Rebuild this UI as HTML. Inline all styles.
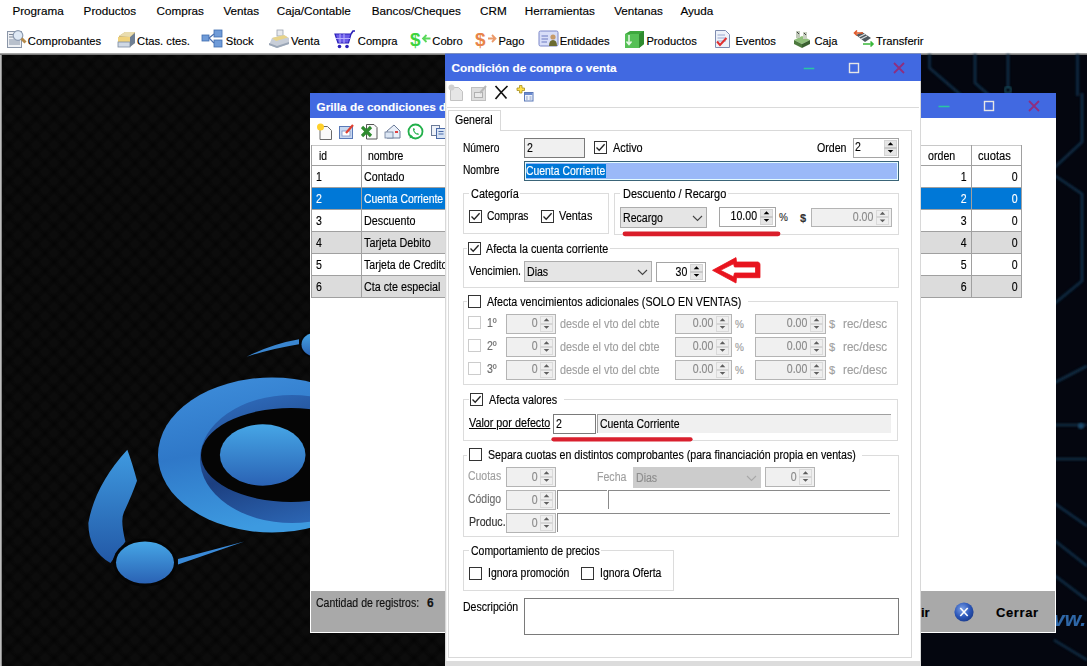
<!DOCTYPE html>
<html><head><meta charset="utf-8"><style>
html,body{margin:0;padding:0;}
body{width:1087px;height:666px;overflow:hidden;position:relative;background:#fff;font-family:"Liberation Sans", sans-serif;}
.a{position:absolute;}
.t{position:absolute;white-space:nowrap;line-height:1;-webkit-text-stroke:0.15px currentColor;}
</style></head><body>
<div class="a" style="left:0;top:0;width:1087px;height:52px;background:#fff"></div>
<div class="t" style="top:5.10px;font-size:11.7px;color:#000;left:12.399999999999999px;">Programa</div>
<div class="t" style="top:5.10px;font-size:11.7px;color:#000;left:83.60000000000001px;">Productos</div>
<div class="t" style="top:5.10px;font-size:11.7px;color:#000;left:156.5px;">Compras</div>
<div class="t" style="top:5.10px;font-size:11.7px;color:#000;left:223.39999999999998px;">Ventas</div>
<div class="t" style="top:5.10px;font-size:11.7px;color:#000;left:276.7px;">Caja/Contable</div>
<div class="t" style="top:5.10px;font-size:11.7px;color:#000;left:371.8px;">Bancos/Cheques</div>
<div class="t" style="top:5.10px;font-size:11.7px;color:#000;left:480.09999999999997px;">CRM</div>
<div class="t" style="top:5.10px;font-size:11.7px;color:#000;left:524.8000000000001px;">Herramientas</div>
<div class="t" style="top:5.10px;font-size:11.7px;color:#000;left:614.2px;">Ventanas</div>
<div class="t" style="top:5.10px;font-size:11.7px;color:#000;left:680.4000000000001px;">Ayuda</div>
<div class="t" style="top:35.92px;font-size:11.2px;color:#000;left:27.8px;">Comprobantes</div>
<div class="t" style="top:35.92px;font-size:11.2px;color:#000;left:137.1px;">Ctas. ctes.</div>
<div class="t" style="top:35.92px;font-size:11.2px;color:#000;left:225.7px;">Stock</div>
<div class="t" style="top:35.92px;font-size:11.2px;color:#000;left:291.0px;">Venta</div>
<div class="t" style="top:35.92px;font-size:11.2px;color:#000;left:357.8px;">Compra</div>
<div class="t" style="top:35.92px;font-size:11.2px;color:#000;left:432.3px;">Cobro</div>
<div class="t" style="top:35.92px;font-size:11.2px;color:#000;left:498.4px;">Pago</div>
<div class="t" style="top:35.92px;font-size:11.2px;color:#000;left:559.8000000000001px;">Entidades</div>
<div class="t" style="top:35.92px;font-size:11.2px;color:#000;left:646.4000000000001px;">Productos</div>
<div class="t" style="top:35.92px;font-size:11.2px;color:#000;left:735.4000000000001px;">Eventos</div>
<div class="t" style="top:35.92px;font-size:11.2px;color:#000;left:814.5px;">Caja</div>
<div class="t" style="top:35.92px;font-size:11.2px;color:#000;left:876.1px;">Transferir</div>
<div class="a" style="left:0px;top:53px;width:1087px;height:1px;background:#a4a4a4;"></div>
<div class="a" style="left:0px;top:54px;width:1087px;height:1px;background:#7c7c7c;"></div>
<svg class="a" style="left:6px;top:29px" width="22" height="20" viewBox="0 0 22 20">
<rect x="1.5" y="2.5" width="14" height="16" fill="#eef0f4" stroke="#8a96a8"/>
<rect x="3" y="10" width="11" height="6" fill="#b8c0cc"/>
<path d="M3 5.5 H8 M3 8 H7" stroke="#7d8796"/>
<circle cx="12" cy="6.5" r="4.8" fill="#dfe9f5" stroke="#8d9bb0" stroke-width="1.2"/>
<path d="M15.5 9.5 L19.5 13.5" stroke="#b58a4a" stroke-width="3"/></svg>
<svg class="a" style="left:116px;top:29px" width="22" height="20" viewBox="0 0 22 20">
<path d="M3 7 L9 3 L19 3 L19 14 L13 18 L2 18 Z" fill="#c9b57a"/>
<rect x="2" y="8" width="12" height="5" fill="#f0d27c"/>
<rect x="2" y="13" width="12" height="5" fill="#cfd8e4" stroke="#7a8ba0" stroke-width="0.8"/>
<path d="M14 8 L19 4 L19 14 L14 18 Z" fill="#6f7f94"/>
<path d="M3 7 L9 3 L19 3 L14 8 Z" fill="#e9dcae"/></svg>
<svg class="a" style="left:201px;top:29px" width="22" height="20" viewBox="0 0 22 20">
<rect x="1" y="6" width="7" height="6" fill="#6f9bd8" stroke="#3f6db0" stroke-width="0.8"/>
<rect x="13" y="1" width="8" height="7" fill="#6f9bd8" stroke="#3f6db0" stroke-width="0.8"/>
<rect x="13" y="11" width="8" height="7" fill="#6f9bd8" stroke="#3f6db0" stroke-width="0.8"/>
<path d="M8 9 L13 5 M8 9 L13 14" stroke="#4a6fae" stroke-width="1.2"/></svg>
<svg class="a" style="left:268px;top:29px" width="22" height="20" viewBox="0 0 22 20">
<rect x="9" y="1" width="6" height="6" fill="#e8eaee" stroke="#9aa2ae" stroke-width="0.8"/>
<path d="M4 9 L16 6 L21 9 L21 15 L9 19 L1 16 Z" fill="#c8ced8"/>
<path d="M4 9 L16 6 L20 8.5 L8 12 Z" fill="#e8d48a"/>
<path d="M1 16 L9 19 L21 15 L21 13 L9 17 L1 14Z" fill="#9aa6b6"/></svg>
<svg class="a" style="left:334px;top:29px" width="22" height="20" viewBox="0 0 22 20">
<path d="M1 5 H17 L14.5 14 H4 Z" fill="#6a5ae8" stroke="#2a1fb8" stroke-width="1.2"/>
<path d="M6 5 V14 M10 5 V14 M2 9.5 H16" stroke="#b8b0ff" stroke-width="1"/>
<path d="M17 5 L19 2 H21" stroke="#2a1fb8" stroke-width="1.6" fill="none"/>
<circle cx="5.5" cy="17.5" r="1.8" fill="#2a1fb8"/><circle cx="13" cy="17.5" r="1.8" fill="#2a1fb8"/></svg>
<svg class="a" style="left:410px;top:29px" width="22" height="20" viewBox="0 0 22 20">
<text x="0" y="17" font-family="Liberation Sans" font-weight="bold" font-size="19" fill="#3ed43e">$</text>
<path d="M20.5 9.5 H13 M16.5 6 L13 9.5 L16.5 13" stroke="#5ad85a" stroke-width="1.8" fill="none"/></svg>
<svg class="a" style="left:475px;top:29px" width="22" height="20" viewBox="0 0 22 20">
<text x="0" y="17" font-family="Liberation Sans" font-weight="bold" font-size="19" fill="#e8844a">$</text>
<path d="M13 9.5 H20.5 M17 6 L20.5 9.5 L17 13" stroke="#eb9a6a" stroke-width="1.8" fill="none"/></svg>
<svg class="a" style="left:538px;top:29px" width="22" height="20" viewBox="0 0 22 20">
<rect x="1" y="2" width="19" height="15" rx="1.5" fill="#d8def8" stroke="#7b86c8" stroke-width="1"/>
<path d="M3.5 7 H10 M3.5 10 H10 M3.5 13 H9" stroke="#6a78c0" stroke-width="1.2"/>
<circle cx="15" cy="8" r="2.6" fill="#c69a6a"/>
<path d="M11 17 Q11 11 15 11 Q19 11 19 17 Z" fill="#6a6a30"/></svg>
<svg class="a" style="left:624px;top:29px" width="22" height="20" viewBox="0 0 22 20">
<path d="M1 5 L6 2 L20 2 L20 15 L15 19 L1 19 Z" fill="#3da83d"/>
<path d="M1 5 L15 5 L15 19 L1 19 Z" fill="#55c055"/>
<path d="M15 5 L20 2 L20 15 L15 19 Z" fill="#2f8a2f"/>
<path d="M5 6 V15 M2.5 12.5 L5 15.5 L7.5 12.5" stroke="#e8f8e8" stroke-width="1.5" fill="none"/></svg>
<svg class="a" style="left:714px;top:29px" width="17" height="20" viewBox="0 0 17 20">
<path d="M1.5 1.5 H11.5 L15.5 5.5 V18.5 H1.5 Z" fill="#eef2fa" stroke="#7e8cb0"/>
<path d="M3.5 6 H11 M3.5 9 H12 M3.5 12 H12" stroke="#9aa8d0"/>
<path d="M3 12.5 L6 16 L12.5 9" stroke="#e03030" stroke-width="2" fill="none"/></svg>
<svg class="a" style="left:793px;top:29px" width="18" height="20" viewBox="0 0 18 20">
<path d="M1 11 L9 7 L17 11 L9 15 Z" fill="#8fbf7a"/>
<path d="M1 11 L9 15 L9 19 L1 15 Z" fill="#4d7a3e"/>
<path d="M9 15 L17 11 L17 15 L9 19 Z" fill="#3a6030"/>
<rect x="3" y="2" width="4" height="7" fill="#bfc8b8"/><rect x="10" y="3" width="4" height="7" fill="#c8d0c0"/>
<path d="M4 3 L6 5 M11 4 L13 6" stroke="#404040" stroke-width="1"/></svg>
<svg class="a" style="left:853px;top:29px" width="22" height="20" viewBox="0 0 22 20">
<path d="M3 6 L9 3 L18 9 L12 13 Z" fill="#505a60"/>
<path d="M6 8 L12 5 M8 10 L14 7" stroke="#d8dee0" stroke-width="1.2"/>
<path d="M10 4 H1.5 M4 1.5 L1.5 4 L4 6.5" stroke="#e05a2a" stroke-width="1.6" fill="none"/>
<path d="M10 15 H20 M17.5 12.5 L20 15 L17.5 17.5" stroke="#3ab83a" stroke-width="1.6" fill="none"/></svg>
<div class="a" style="left:0;top:55px;width:1087px;height:611px;background-color:#050505;background-image:radial-gradient(circle, #0c0c0c 0, #0c0c0c 3px, rgba(5,5,5,0) 8px),radial-gradient(circle, #0c0c0c 0, #0c0c0c 3px, rgba(5,5,5,0) 8px);background-size:18px 18px;background-position:0 0,9px 9px"></div>
<div class="a" style="left:700px;top:55px;width:387px;height:611px;background:#04060f"></div>
<div class="a" style="left:0;top:55px;width:1px;height:611px;background:#bdbdbd"></div>
<div class="a" style="left:1px;top:55px;width:1px;height:611px;background:#8a8a8a"></div>
<svg class="a" style="left:0;top:0" width="1087" height="666">
<defs>
<linearGradient id="ringg" x1="0" y1="0" x2="0.3" y2="1"><stop offset="0" stop-color="#3f8fdc"/><stop offset="0.5" stop-color="#2f78c8"/><stop offset="1" stop-color="#3d9ae0"/></linearGradient>
<linearGradient id="wallg" x1="0.2" y1="0" x2="0.6" y2="1"><stop offset="0" stop-color="#2f6cbc"/><stop offset="0.55" stop-color="#1c3f80"/><stop offset="1" stop-color="#2c66b4"/></linearGradient>
<linearGradient id="ballg" x1="0" y1="0" x2="0" y2="1"><stop offset="0" stop-color="#46a6e6"/><stop offset="1" stop-color="#2a62b4"/></linearGradient>
<linearGradient id="crg" x1="0" y1="0" x2="0" y2="1"><stop offset="0" stop-color="#3f9ae0"/><stop offset="1" stop-color="#2258a6"/></linearGradient>
</defs>
<ellipse cx="272" cy="455" rx="114" ry="77.5" fill="url(#ringg)"/>
<ellipse cx="292" cy="459" rx="92" ry="64" fill="url(#wallg)"/>
<ellipse cx="291" cy="455" rx="90" ry="47" fill="#050505"/>
<ellipse cx="262.7" cy="455" rx="42.8" ry="30.7" fill="url(#ballg)"/>
<path d="M127.3 449.7 Q95 485 88.4 522.7 Q88 550 110.5 563 L125.4 541.6 Q120 520 124 512 Q132 495 137 480.8 Q132 462 127.3 449.7 Z" fill="url(#crg)"/>
<ellipse cx="145" cy="562.5" rx="32" ry="24" fill="#050505"/>
<ellipse cx="145" cy="562.5" rx="29" ry="21" fill="url(#ballg)"/>
<path d="M178 559 L244.3 541.6 L178 564.6 Z" fill="#3a8ad8"/>
<path d="M246.6 356.8 Q272 344 299 339.3 L299 344.2 Q270 349 246.6 356.8 Z" fill="#3a86d0"/>
<ellipse cx="316" cy="344.4" rx="16" ry="13.5" fill="#050505"/>
<ellipse cx="316" cy="344.4" rx="14.5" ry="12" fill="url(#ballg)"/>
</svg>
<svg class="a" style="left:0;top:0" width="1087" height="666">
<defs><filter id="soft" x="-10%" y="-10%" width="120%" height="120%"><feGaussianBlur stdDeviation="0.8"/></filter></defs>
<g filter="url(#soft)" fill="none" stroke="#143550" stroke-width="2.6" opacity="0.85">
<path d="M929.5 54 V68 L962 96 M975 54 V83 L990 96 M1008 54 V88 M1077.5 54 V96"/>
<path d="M1082 93 V142 L1054 168 M1054 175 L1082 194 V281 L1054 304"/>
<path d="M1054 383 L1087 366 M1054 425 H1087 M1054 459 H1087 M1054 503 L1087 526 M1054 540 L1087 566 M1054 575 L1087 600 M1054 640 L1087 660"/>
</g>
<circle cx="1008" cy="90" r="3.2" fill="none" stroke="#1a4a58" stroke-width="2" filter="url(#soft)"/>
<circle cx="1081" cy="426" r="3" fill="#1a4a6a" filter="url(#soft)"/>
</svg>
<div class="t" style="left:1053px;top:608px;font-size:21px;font-weight:bold;font-style:italic;color:#3472b8;opacity:0.9">vw.</div>

<div class="a" style="left:0;top:0;width:1087px;height:666px;overflow:hidden">
<div class="a" style="left:310px;top:93px;width:746px;height:540px;background:#ffffff;"></div>
<div class="a" style="left:310px;top:93px;width:746px;height:25px;background:#4169e1;"></div>
<div class="t" style="top:101.81px;font-size:11.8px;color:#fff;left:316.5px;font-weight:bold;">Grilla de condiciones de compra o venta</div>
<svg class="a" style="left:0;top:0" width="1087" height="666"><path d="M938.5 106.5 H949.5" stroke="#2ac4a4" stroke-width="1.6"/><rect x="984.5" y="101.5" width="9" height="9" fill="none" stroke="#e6e6e6" stroke-width="1.4"/><path d="M1029 101 L1039 111 M1039 101 L1029 111" stroke="#8e2e80" stroke-width="1.8"/></svg>
<svg class="a" style="left:316px;top:123px" width="17" height="17" viewBox="0 0 17 17">
<path d="M4 3.5 H11.5 L15.5 7.5 V16.5 H4 Z" fill="#fafafa" stroke="#6a6a6a"/>
<circle cx="4.5" cy="4" r="3.5" fill="#ffd02a"/></svg>
<svg class="a" style="left:338px;top:123px" width="17" height="17" viewBox="0 0 17 17">
<rect x="1.5" y="3.5" width="13" height="12" fill="#c8d8f0" stroke="#5a7ab8"/>
<rect x="4" y="8" width="8" height="5" fill="#fff" stroke="#7a90c0" stroke-width="0.8"/>
<path d="M8 10 L15 2" stroke="#e04030" stroke-width="2.2"/></svg>
<svg class="a" style="left:361px;top:123px" width="17" height="17" viewBox="0 0 17 17">
<path d="M5.5 1.5 H13 L16 4.5 V16 H5.5 Z" fill="#fafafa" stroke="#555"/>
<path d="M1 4 L10 13 M10 4 L1 13" stroke="#2f8a2f" stroke-width="3.2"/></svg>
<svg class="a" style="left:384px;top:123px" width="17" height="17" viewBox="0 0 17 17">
<path d="M3 8 L10 2 L16 8 V15 H3 Z" fill="#e8eef8" stroke="#6a7a98"/>
<rect x="1" y="9" width="8" height="6" fill="#dce6f4" stroke="#6a7a98" stroke-width="0.8"/>
<rect x="11" y="8" width="3" height="2" fill="#e04040"/></svg>
<svg class="a" style="left:407px;top:123px" width="17" height="17" viewBox="0 0 17 17">
<circle cx="8.5" cy="8.5" r="7" fill="#fff" stroke="#22b04a" stroke-width="1.8"/>
<path d="M2.5 15.5 L3.5 11.5 L6 13.5 Z" fill="#22b04a"/>
<path d="M6 5.5 Q5.5 8 8 10.5 Q10.5 12.5 12 11.5 L11 10 L9.8 10.6 Q8 9.5 7.2 7.4 L8 6.6 L7 5 Z" fill="#22b04a"/></svg>
<svg class="a" style="left:430px;top:123px" width="17" height="17" viewBox="0 0 17 17">
<rect x="1.5" y="2.5" width="8" height="10" fill="#eef2f8" stroke="#6a7a98"/>
<rect x="6.5" y="5.5" width="9" height="10" fill="#d8e4f4" stroke="#4a6aa8"/>
<path d="M8.5 8.5 H13.5 M8.5 11 H13.5" stroke="#4a6aa8"/></svg>
<div class="a" style="left:311px;top:145px;width:135px;height:152px;background:#fff;"></div>
<div class="a" style="left:921px;top:145px;width:101px;height:152px;background:#fff;"></div>
<div class="a" style="left:311px;top:165px;width:135px;height:22px;background:#ffffff;"></div>
<div class="a" style="left:921px;top:165px;width:101px;height:22px;background:#ffffff;"></div>
<div class="a" style="left:311px;top:187px;width:135px;height:22px;background:#0078d7;"></div>
<div class="a" style="left:921px;top:187px;width:101px;height:22px;background:#0078d7;"></div>
<div class="a" style="left:311px;top:209px;width:135px;height:22px;background:#ffffff;"></div>
<div class="a" style="left:921px;top:209px;width:101px;height:22px;background:#ffffff;"></div>
<div class="a" style="left:311px;top:231px;width:135px;height:22px;background:#dcdcdc;"></div>
<div class="a" style="left:921px;top:231px;width:101px;height:22px;background:#dcdcdc;"></div>
<div class="a" style="left:311px;top:253px;width:135px;height:22px;background:#ffffff;"></div>
<div class="a" style="left:921px;top:253px;width:101px;height:22px;background:#ffffff;"></div>
<div class="a" style="left:311px;top:275px;width:135px;height:22px;background:#dcdcdc;"></div>
<div class="a" style="left:921px;top:275px;width:101px;height:22px;background:#dcdcdc;"></div>
<div class="a" style="left:311px;top:165px;width:135px;height:1px;background:#a0a0a0;"></div>
<div class="a" style="left:921px;top:165px;width:101px;height:1px;background:#a0a0a0;"></div>
<div class="a" style="left:311px;top:187px;width:135px;height:1px;background:#a0a0a0;"></div>
<div class="a" style="left:921px;top:187px;width:101px;height:1px;background:#a0a0a0;"></div>
<div class="a" style="left:311px;top:209px;width:135px;height:1px;background:#a0a0a0;"></div>
<div class="a" style="left:921px;top:209px;width:101px;height:1px;background:#a0a0a0;"></div>
<div class="a" style="left:311px;top:231px;width:135px;height:1px;background:#a0a0a0;"></div>
<div class="a" style="left:921px;top:231px;width:101px;height:1px;background:#a0a0a0;"></div>
<div class="a" style="left:311px;top:253px;width:135px;height:1px;background:#a0a0a0;"></div>
<div class="a" style="left:921px;top:253px;width:101px;height:1px;background:#a0a0a0;"></div>
<div class="a" style="left:311px;top:275px;width:135px;height:1px;background:#a0a0a0;"></div>
<div class="a" style="left:921px;top:275px;width:101px;height:1px;background:#a0a0a0;"></div>
<div class="a" style="left:311px;top:297px;width:135px;height:1px;background:#a0a0a0;"></div>
<div class="a" style="left:921px;top:297px;width:101px;height:1px;background:#a0a0a0;"></div>
<div class="a" style="left:311px;top:145px;width:135px;height:1px;background:#c8c8c8;"></div>
<div class="a" style="left:921px;top:145px;width:101px;height:1px;background:#c8c8c8;"></div>
<div class="a" style="left:311px;top:145px;width:1px;height:152px;background:#a0a0a0;"></div>
<div class="a" style="left:361px;top:145px;width:1px;height:152px;background:#a0a0a0;"></div>
<div class="a" style="left:971px;top:145px;width:1px;height:152px;background:#a0a0a0;"></div>
<div class="a" style="left:1021px;top:145px;width:1px;height:152px;background:#a0a0a0;"></div>
<div class="t" style="top:150.14px;font-size:12px;color:#000;left:319.09999999999997px;transform:scaleX(0.8593);transform-origin:left top;">id</div>
<div class="t" style="top:150.14px;font-size:12px;color:#000;left:368.0px;transform:scaleX(0.8709);transform-origin:left top;">nombre</div>
<div class="t" style="top:150.14px;font-size:12px;color:#000;left:928.1999999999999px;transform:scaleX(0.8872);transform-origin:left top;">orden</div>
<div class="t" style="top:150.14px;font-size:12px;color:#000;left:977.9px;transform:scaleX(0.9292);transform-origin:left top;">cuotas</div>
<div class="t" style="top:171.44px;font-size:12px;color:#000;left:315.59999999999997px;transform:scaleX(0.8800);transform-origin:left top;">1</div>
<div class="t" style="top:171.44px;font-size:12px;color:#000;left:364.09999999999997px;transform:scaleX(0.8890);transform-origin:left top;">Contado</div>
<div class="t" style="top:171.44px;font-size:12px;color:#000;right:120.5px;transform:scaleX(0.8800);transform-origin:right top;">1</div>
<div class="t" style="top:171.44px;font-size:12px;color:#000;right:69.5px;transform:scaleX(0.8800);transform-origin:right top;">0</div>
<div class="t" style="top:193.44px;font-size:12px;color:#fff;left:315.59999999999997px;transform:scaleX(0.8800);transform-origin:left top;">2</div>
<div class="t" style="top:193.44px;font-size:12px;color:#fff;left:364.09999999999997px;transform:scaleX(0.8659);transform-origin:left top;">Cuenta Corriente</div>
<div class="t" style="top:193.44px;font-size:12px;color:#fff;right:120.5px;transform:scaleX(0.8800);transform-origin:right top;">2</div>
<div class="t" style="top:193.44px;font-size:12px;color:#fff;right:69.5px;transform:scaleX(0.8800);transform-origin:right top;">0</div>
<div class="t" style="top:215.44px;font-size:12px;color:#000;left:315.59999999999997px;transform:scaleX(0.8800);transform-origin:left top;">3</div>
<div class="t" style="top:215.44px;font-size:12px;color:#000;left:364.09999999999997px;transform:scaleX(0.8966);transform-origin:left top;">Descuento</div>
<div class="t" style="top:215.44px;font-size:12px;color:#000;right:120.5px;transform:scaleX(0.8800);transform-origin:right top;">3</div>
<div class="t" style="top:215.44px;font-size:12px;color:#000;right:69.5px;transform:scaleX(0.8800);transform-origin:right top;">0</div>
<div class="t" style="top:237.44px;font-size:12px;color:#000;left:315.59999999999997px;transform:scaleX(0.8800);transform-origin:left top;">4</div>
<div class="t" style="top:237.44px;font-size:12px;color:#000;left:364.09999999999997px;transform:scaleX(0.9014);transform-origin:left top;">Tarjeta Debito</div>
<div class="t" style="top:237.44px;font-size:12px;color:#000;right:120.5px;transform:scaleX(0.8800);transform-origin:right top;">4</div>
<div class="t" style="top:237.44px;font-size:12px;color:#000;right:69.5px;transform:scaleX(0.8800);transform-origin:right top;">0</div>
<div class="t" style="top:259.44px;font-size:12px;color:#000;left:315.59999999999997px;transform:scaleX(0.8800);transform-origin:left top;">5</div>
<div class="t" style="top:259.44px;font-size:12px;color:#000;left:364.09999999999997px;transform:scaleX(0.8800);transform-origin:left top;">Tarjeta de Credito</div>
<div class="t" style="top:259.44px;font-size:12px;color:#000;right:120.5px;transform:scaleX(0.8800);transform-origin:right top;">5</div>
<div class="t" style="top:259.44px;font-size:12px;color:#000;right:69.5px;transform:scaleX(0.8800);transform-origin:right top;">0</div>
<div class="t" style="top:281.44px;font-size:12px;color:#000;left:315.59999999999997px;transform:scaleX(0.8800);transform-origin:left top;">6</div>
<div class="t" style="top:281.44px;font-size:12px;color:#000;left:364.09999999999997px;transform:scaleX(0.8952);transform-origin:left top;">Cta cte especial</div>
<div class="t" style="top:281.44px;font-size:12px;color:#000;right:120.5px;transform:scaleX(0.8800);transform-origin:right top;">6</div>
<div class="t" style="top:281.44px;font-size:12px;color:#000;right:69.5px;transform:scaleX(0.8800);transform-origin:right top;">0</div>
<div class="a" style="left:311px;top:591px;width:744px;height:41px;background:#a9a9a9;"></div>
<div class="t" style="top:596.64px;font-size:12px;color:#111;left:315.9px;transform:scaleX(0.8785);transform-origin:left top;">Cantidad de registros:</div>
<div class="t" style="top:596.64px;font-size:12px;color:#111;left:427px;font-weight:bold;">6</div>
<div class="t" style="top:606.20px;font-size:13px;color:#000;left:921px;font-weight:bold;">ir</div>
<div class="t" style="top:606.20px;font-size:13px;color:#000;left:996px;font-weight:bold;letter-spacing:0.6px;">Cerrar</div>
<svg class="a" style="left:953px;top:601px" width="22" height="22"><defs><radialGradient id="xg" cx="0.4" cy="0.35" r="0.7"><stop offset="0" stop-color="#7fa3e8"/><stop offset="0.6" stop-color="#2b56b8"/><stop offset="1" stop-color="#1a3a8a"/></radialGradient></defs><circle cx="11" cy="11" r="9.6" fill="url(#xg)"/><path d="M7.3 7 L14.7 15 M14.7 7 L7.3 15" stroke="#fff" stroke-width="1.6"/></svg>
</div>
<div class="a" style="left:0;top:0;width:1087px;height:666px;overflow:hidden">
<div class="a" style="left:310px;top:93px;width:135px;height:25px;overflow:hidden"></div>
<div class="a" style="left:445px;top:55px;width:476px;height:611px;background:#ffffff;"></div>
<div class="a" style="left:445px;top:80px;width:1px;height:586px;background:#d8d8d8;"></div>
<div class="a" style="left:446px;top:80px;width:1px;height:586px;background:#f4f4f4;"></div>
<div class="a" style="left:920px;top:80px;width:1px;height:586px;background:#d8d8d8;"></div>
<div class="a" style="left:445px;top:53px;width:476px;height:1px;background:#7d8fc0;"></div>
<div class="a" style="left:445px;top:54px;width:476px;height:27px;background:#4169e1;"></div>
<div class="t" style="top:62.81px;font-size:11.8px;color:#fff;left:451.5px;font-weight:bold;">Condición de compra o venta</div>
<svg class="a" style="left:0;top:0" width="1087" height="666"><path d="M803.7 68.5 H814.3" stroke="#2ac4a4" stroke-width="1.6"/><rect x="849.5" y="63.5" width="9" height="9" fill="none" stroke="#e6e6e6" stroke-width="1.4"/><path d="M894 63 L904 73 M904 63 L894 73" stroke="#8e2e80" stroke-width="1.8"/></svg>
<svg class="a" style="left:448px;top:84px" width="17" height="18" viewBox="0 0 17 18">
<path d="M2.5 3.5 H10.5 L14.5 7.5 V16.5 H2.5 Z" fill="#e6e6e6" stroke="#c2c2c2"/>
<circle cx="3.5" cy="3.5" r="3" fill="#d0d0d0"/></svg>
<svg class="a" style="left:470px;top:84px" width="17" height="18" viewBox="0 0 17 18">
<rect x="1.5" y="3.5" width="14" height="13" fill="#dedede" stroke="#c0c0c0"/>
<rect x="4.5" y="8.5" width="8" height="5" fill="#eaeaea" stroke="#b0b0b0"/>
<path d="M10 9 L16 2" stroke="#b8b8b8" stroke-width="2"/></svg>
<svg class="a" style="left:494px;top:84px" width="15" height="17" viewBox="0 0 15 17">
<path d="M1.5 2 Q7 8 12.5 14.5 M13.5 2 Q7 8 1.5 15" stroke="#111" stroke-width="1.7" fill="none"/></svg>
<svg class="a" style="left:516px;top:84px" width="18" height="18" viewBox="0 0 18 18">
<path d="M3.5 1.5 H6 V4 H8.5 V6.5 H6 V9 H3.5 V6.5 H1 V4 H3.5 Z" fill="#ffe04a" stroke="#a89020" stroke-width="0.8"/>
<rect x="8.5" y="8.5" width="8.5" height="8.5" fill="#eef3fb" stroke="#5a78b8"/>
<rect x="9" y="9" width="7.5" height="2" fill="#6a8ad0"/>
<path d="M10 13 H11.8 M13.5 13 H15.5 M10 15 H11.8 M13.5 15 H15.5" stroke="#7a90c0" stroke-width="0.9"/></svg>
<div class="a" style="left:447px;top:107px;width:472px;height:1px;background:#dadada;"></div>
<div class="a" style="left:448px;top:110px;width:53px;height:21px;background:#fff;box-shadow:inset 0 0 0 1px #d9d9d9;"></div>
<div class="a" style="left:449px;top:130px;width:51px;height:2px;background:#fff;"></div>
<div class="t" style="top:113.64px;font-size:12px;color:#000;left:454.9px;transform:scaleX(0.8790);transform-origin:left top;">General</div>
<div class="a" style="left:500px;top:130px;width:412px;height:1px;background:#d9d9d9;"></div>
<div class="a" style="left:448px;top:130px;width:1px;height:528px;background:#d9d9d9;"></div>
<div class="a" style="left:911px;top:130px;width:1px;height:528px;background:#d9d9d9;"></div>
<div class="a" style="left:448px;top:657px;width:464px;height:1px;background:#d9d9d9;"></div>
<div class="a" style="left:445px;top:661px;width:476px;height:5px;background:#dcdcdc;"></div>
<div class="t" style="top:141.84px;font-size:12px;color:#000;left:462.79999999999995px;transform:scaleX(0.8510);transform-origin:left top;">Número</div>
<div class="a" style="left:524px;top:138px;width:61px;height:20px;background:#f0f0f0;box-shadow:inset 0 0 0 1px #7a7a7a;"></div>
<div class="t" style="top:141.84px;font-size:12px;color:#000;left:526.6px;transform:scaleX(0.8800);transform-origin:left top;">2</div>
<div class="a" style="left:594px;top:141px;width:13px;height:13px;background:#fff;box-shadow:inset 0 0 0 1px #333333;"></div>
<svg class="a" style="left:594px;top:141px" width="13" height="13"><path d="M2.5 6.5 L5.2 9.3 L10.6 3.2" fill="none" stroke="#222" stroke-width="1.3"/></svg>
<div class="t" style="top:141.84px;font-size:12px;color:#000;left:612.8px;transform:scaleX(0.9070);transform-origin:left top;">Activo</div>
<div class="t" style="top:141.74px;font-size:12px;color:#000;left:817.0px;transform:scaleX(0.8855);transform-origin:left top;">Orden</div>
<div class="a" style="left:853px;top:138px;width:46px;height:20px;background:#fff;box-shadow:inset 0 0 0 1px #a5a5a5;"></div>
<div class="t" style="top:141.44px;font-size:12px;color:#000;left:854.6999999999999px;transform:scaleX(0.8800);transform-origin:left top;">2</div>
<div class="a" style="left:884px;top:139.5px;width:13px;height:16.5px;background:#e6e6e6;box-shadow:inset 0 0 0 1px #d4d4d4;"></div>
<div class="a" style="left:884px;top:146.75px;width:13px;height:2.0px;background:#c8c8c8;"></div>
<svg class="a" style="left:0;top:0" width="1087" height="666" overflow="visible"><path d="M887.7 145.15 L893.3 145.15 L890.5 142.35 Z M887.7 150.05 L893.3 150.05 L890.5 152.85 Z" fill="#000"/></svg>
<div class="t" style="top:164.34px;font-size:12px;color:#000;left:462.79999999999995px;transform:scaleX(0.8510);transform-origin:left top;">Nombre</div>
<div class="a" style="left:524px;top:161px;width:375px;height:20px;background:#99b9f6;box-shadow:inset 0 0 0 1px #3a6478;"></div>
<div class="a" style="left:525px;top:162px;width:373px;height:18px;background:#9ab9f8;box-shadow:inset 0 0 0 1px #e4fcff;"></div>
<div class="a" style="left:526px;top:163.5px;width:80px;height:14.5px;background:#0078d7;"></div>
<div class="t" style="top:165.14px;font-size:12px;color:#fff;left:526.1999999999999px;transform:scaleX(0.8670);transform-origin:left top;">Cuenta Corriente</div>
<div class="a" style="left:463px;top:193px;width:6px;height:1px;background:#dcdcdc;"></div>
<div class="a" style="left:520px;top:193px;width:89px;height:1px;background:#dcdcdc;"></div>
<div class="a" style="left:463px;top:193px;width:1px;height:41px;background:#dcdcdc;"></div>
<div class="a" style="left:608px;top:193px;width:1px;height:41px;background:#dcdcdc;"></div>
<div class="a" style="left:463px;top:233px;width:146px;height:1px;background:#dcdcdc;"></div>
<div class="t" style="top:188.14px;font-size:12px;color:#000;left:470.79999999999995px;transform:scaleX(0.9098);transform-origin:left top;">Categoría</div>
<div class="a" style="left:469px;top:210px;width:13px;height:13px;background:#fff;box-shadow:inset 0 0 0 1px #333333;"></div>
<svg class="a" style="left:469px;top:210px" width="13" height="13"><path d="M2.5 6.5 L5.2 9.3 L10.6 3.2" fill="none" stroke="#222" stroke-width="1.3"/></svg>
<div class="t" style="top:210.34px;font-size:12px;color:#000;left:487.2px;transform:scaleX(0.8509);transform-origin:left top;">Compras</div>
<div class="a" style="left:541px;top:210px;width:13px;height:13px;background:#fff;box-shadow:inset 0 0 0 1px #333333;"></div>
<svg class="a" style="left:541px;top:210px" width="13" height="13"><path d="M2.5 6.5 L5.2 9.3 L10.6 3.2" fill="none" stroke="#222" stroke-width="1.3"/></svg>
<div class="t" style="top:210.34px;font-size:12px;color:#000;left:559.4px;transform:scaleX(0.9086);transform-origin:left top;">Ventas</div>
<div class="a" style="left:614px;top:193px;width:6px;height:1px;background:#dcdcdc;"></div>
<div class="a" style="left:728px;top:193px;width:171px;height:1px;background:#dcdcdc;"></div>
<div class="a" style="left:614px;top:193px;width:1px;height:42px;background:#dcdcdc;"></div>
<div class="a" style="left:898px;top:193px;width:1px;height:42px;background:#dcdcdc;"></div>
<div class="a" style="left:614px;top:234px;width:285px;height:1px;background:#dcdcdc;"></div>
<div class="t" style="top:188.14px;font-size:12px;color:#000;left:623.1999999999999px;transform:scaleX(0.9159);transform-origin:left top;">Descuento / Recargo</div>
<div class="a" style="left:620px;top:207px;width:87px;height:21px;background:#e5e5e5;box-shadow:inset 0 0 0 1px #adadad;"></div>
<div class="t" style="top:212.04px;font-size:12px;color:#000;left:623.4px;transform:scaleX(0.8800);transform-origin:left top;">Recargo</div>
<svg class="a" style="left:0;top:0" width="1087" height="666"><path d="M693.0 216.0 L697.5 220.5 L702.0 216.0" fill="none" stroke="#444" stroke-width="1.1"/></svg>
<div class="a" style="left:719px;top:207px;width:57px;height:20px;background:#ffffff;box-shadow:inset 0 0 0 1px #a5a5a5;"></div>
<div class="a" style="left:760px;top:208.5px;width:13px;height:16.5px;background:#e6e6e6;box-shadow:inset 0 0 0 1px #d4d4d4;"></div>
<div class="a" style="left:760px;top:215.75px;width:13px;height:2.0px;background:#c8c8c8;"></div>
<svg class="a" style="left:0;top:0" width="1087" height="666" overflow="visible"><path d="M763.7 214.15 L769.3 214.15 L766.5 211.35 Z M763.7 219.05 L769.3 219.05 L766.5 221.85 Z" fill="#000"/></svg>
<div class="t" style="top:210.44px;font-size:12px;color:#000;right:329.70000000000005px;transform:scaleX(0.8800);transform-origin:right top;">10.00</div>
<div class="t" style="top:213.03px;font-size:10px;color:#333;left:779px;">%</div>
<div class="t" style="top:212.69px;font-size:11px;color:#333;left:800px;font-weight:bold;">$</div>
<div class="a" style="left:811px;top:208px;width:81px;height:19px;background:#f0f0f0;box-shadow:inset 0 0 0 1px #b4b4b4;"></div>
<div class="a" style="left:876px;top:209.5px;width:13px;height:15.5px;background:#efefef;box-shadow:inset 0 0 0 1px #dadada;"></div>
<div class="a" style="left:876px;top:216.25px;width:13px;height:2.0px;background:#d6d6d6;"></div>
<svg class="a" style="left:0;top:0" width="1087" height="666" overflow="visible"><path d="M879.7 214.65 L885.3 214.65 L882.5 211.85 Z M879.7 219.55 L885.3 219.55 L882.5 222.35 Z" fill="#5e5e5e"/></svg>
<div class="t" style="top:211.14px;font-size:12px;color:#8a8a8a;right:213.70000000000005px;transform:scaleX(0.8800);transform-origin:right top;">0.00</div>
<svg class="a" style="left:0;top:0" width="1087" height="666"><path d="M625 233.8 H778" stroke="#da1e2a" stroke-width="4.8" stroke-linecap="round"/></svg>
<div class="a" style="left:463px;top:248px;width:4px;height:1px;background:#dcdcdc;"></div>
<div class="a" style="left:610px;top:248px;width:289px;height:1px;background:#dcdcdc;"></div>
<div class="a" style="left:463px;top:248px;width:1px;height:40px;background:#dcdcdc;"></div>
<div class="a" style="left:898px;top:248px;width:1px;height:40px;background:#dcdcdc;"></div>
<div class="a" style="left:463px;top:287px;width:436px;height:1px;background:#dcdcdc;"></div>
<div class="a" style="left:468px;top:242px;width:13px;height:13px;background:#fff;box-shadow:inset 0 0 0 1px #333333;"></div>
<svg class="a" style="left:468px;top:242px" width="13" height="13"><path d="M2.5 6.5 L5.2 9.3 L10.6 3.2" fill="none" stroke="#222" stroke-width="1.3"/></svg>
<div class="t" style="top:242.64px;font-size:12px;color:#000;left:486.4px;transform:scaleX(0.8991);transform-origin:left top;">Afecta la cuenta corriente</div>
<div class="t" style="top:264.94px;font-size:12px;color:#000;left:468.79999999999995px;transform:scaleX(0.8865);transform-origin:left top;">Vencimien.</div>
<div class="a" style="left:524px;top:261px;width:128px;height:21px;background:#e5e5e5;box-shadow:inset 0 0 0 1px #adadad;"></div>
<div class="t" style="top:265.94px;font-size:12px;color:#000;left:527.4px;transform:scaleX(0.8800);transform-origin:left top;">Dias</div>
<svg class="a" style="left:0;top:0" width="1087" height="666"><path d="M638.0 270.0 L642.5 274.5 L647.0 270.0" fill="none" stroke="#444" stroke-width="1.1"/></svg>
<div class="a" style="left:656px;top:262px;width:50px;height:20px;background:#ffffff;box-shadow:inset 0 0 0 1px #a5a5a5;"></div>
<div class="a" style="left:690px;top:263.5px;width:13px;height:16.5px;background:#e6e6e6;box-shadow:inset 0 0 0 1px #d4d4d4;"></div>
<div class="a" style="left:690px;top:270.75px;width:13px;height:2.0px;background:#c8c8c8;"></div>
<svg class="a" style="left:0;top:0" width="1087" height="666" overflow="visible"><path d="M693.7 269.15 L699.3 269.15 L696.5 266.35 Z M693.7 274.05 L699.3 274.05 L696.5 276.85 Z" fill="#000"/></svg>
<div class="t" style="top:265.54px;font-size:12px;color:#000;right:399.20000000000005px;transform:scaleX(0.8800);transform-origin:right top;">30</div>
<svg class="a" style="left:0;top:0" width="1087" height="666"><path fill-rule="evenodd" fill="#e8141e" stroke="#e8141e" stroke-width="0.8" stroke-linejoin="round" d="M712.5 270.3 L736 257.6 L736.5 262 L758 262 Q760 262.5 760 264.5 L760 277.7 L736.5 277.7 L736 283 Z M720.5 270.3 L733.5 263.8 L734.5 267 L755.5 267 L755.5 273 L734.5 273 L733.5 276.8 Z"/></svg>
<div class="a" style="left:463px;top:301px;width:4px;height:1px;background:#dcdcdc;"></div>
<div class="a" style="left:748px;top:301px;width:150px;height:1px;background:#dcdcdc;"></div>
<div class="a" style="left:463px;top:301px;width:1px;height:84px;background:#dcdcdc;"></div>
<div class="a" style="left:897px;top:301px;width:1px;height:84px;background:#dcdcdc;"></div>
<div class="a" style="left:463px;top:384px;width:435px;height:1px;background:#dcdcdc;"></div>
<div class="a" style="left:468px;top:295px;width:13px;height:13px;background:#fff;box-shadow:inset 0 0 0 1px #333333;"></div>
<div class="t" style="top:295.64px;font-size:12px;color:#000;left:486.7px;transform:scaleX(0.8896);transform-origin:left top;">Afecta vencimientos adicionales (SOLO EN VENTAS)</div>
<div class="a" style="left:468px;top:316px;width:13px;height:13px;background:#fff;box-shadow:inset 0 0 0 1px #cccccc;"></div>
<div class="t" style="top:316.64px;font-size:12px;color:#6d6d6d;left:486.7px;transform:scaleX(0.8800);transform-origin:left top;">1º</div>
<div class="a" style="left:506px;top:314px;width:50px;height:20px;background:#f0f0f0;box-shadow:inset 0 0 0 1px #b4b4b4;"></div>
<div class="a" style="left:540px;top:315.5px;width:13px;height:16.5px;background:#efefef;box-shadow:inset 0 0 0 1px #dadada;"></div>
<div class="a" style="left:540px;top:322.75px;width:13px;height:2.0px;background:#d6d6d6;"></div>
<svg class="a" style="left:0;top:0" width="1087" height="666" overflow="visible"><path d="M543.7 321.15 L549.3 321.15 L546.5 318.35 Z M543.7 326.05 L549.3 326.05 L546.5 328.85 Z" fill="#5e5e5e"/></svg>
<div class="t" style="top:317.44px;font-size:12px;color:#8a8a8a;right:549.2px;transform:scaleX(0.8800);transform-origin:right top;">0</div>
<div class="t" style="top:318.34px;font-size:12px;color:#a0a0a0;left:560.1px;transform:scaleX(0.9034);transform-origin:left top;">desde el vto del cbte</div>
<div class="a" style="left:675px;top:314px;width:57px;height:20px;background:#f0f0f0;box-shadow:inset 0 0 0 1px #b4b4b4;"></div>
<div class="a" style="left:716px;top:315.5px;width:13px;height:16.5px;background:#efefef;box-shadow:inset 0 0 0 1px #dadada;"></div>
<div class="a" style="left:716px;top:322.75px;width:13px;height:2.0px;background:#d6d6d6;"></div>
<svg class="a" style="left:0;top:0" width="1087" height="666" overflow="visible"><path d="M719.7 321.15 L725.3 321.15 L722.5 318.35 Z M719.7 326.05 L725.3 326.05 L722.5 328.85 Z" fill="#5e5e5e"/></svg>
<div class="t" style="top:317.44px;font-size:12px;color:#8a8a8a;right:373.4000000000001px;transform:scaleX(0.8800);transform-origin:right top;">0.00</div>
<div class="t" style="top:319.74px;font-size:10px;color:#a0a0a0;left:735px;">%</div>
<div class="a" style="left:755px;top:314px;width:71px;height:20px;background:#f0f0f0;box-shadow:inset 0 0 0 1px #b4b4b4;"></div>
<div class="a" style="left:810px;top:315.5px;width:13px;height:16.5px;background:#efefef;box-shadow:inset 0 0 0 1px #dadada;"></div>
<div class="a" style="left:810px;top:322.75px;width:13px;height:2.0px;background:#d6d6d6;"></div>
<svg class="a" style="left:0;top:0" width="1087" height="666" overflow="visible"><path d="M813.7 321.15 L819.3 321.15 L816.5 318.35 Z M813.7 326.05 L819.3 326.05 L816.5 328.85 Z" fill="#5e5e5e"/></svg>
<div class="t" style="top:317.44px;font-size:12px;color:#8a8a8a;right:279.70000000000005px;transform:scaleX(0.8800);transform-origin:right top;">0.00</div>
<div class="t" style="top:319.19px;font-size:11px;color:#a0a0a0;left:829px;">$</div>
<div class="t" style="top:318.34px;font-size:12px;color:#a0a0a0;left:842.8px;transform:scaleX(0.9716);transform-origin:left top;">rec/desc</div>
<div class="a" style="left:468px;top:339px;width:13px;height:13px;background:#fff;box-shadow:inset 0 0 0 1px #cccccc;"></div>
<div class="t" style="top:339.64px;font-size:12px;color:#6d6d6d;left:486.7px;transform:scaleX(0.8800);transform-origin:left top;">2º</div>
<div class="a" style="left:506px;top:337px;width:50px;height:20px;background:#f0f0f0;box-shadow:inset 0 0 0 1px #b4b4b4;"></div>
<div class="a" style="left:540px;top:338.5px;width:13px;height:16.5px;background:#efefef;box-shadow:inset 0 0 0 1px #dadada;"></div>
<div class="a" style="left:540px;top:345.75px;width:13px;height:2.0px;background:#d6d6d6;"></div>
<svg class="a" style="left:0;top:0" width="1087" height="666" overflow="visible"><path d="M543.7 344.15 L549.3 344.15 L546.5 341.35 Z M543.7 349.05 L549.3 349.05 L546.5 351.85 Z" fill="#5e5e5e"/></svg>
<div class="t" style="top:340.44px;font-size:12px;color:#8a8a8a;right:549.2px;transform:scaleX(0.8800);transform-origin:right top;">0</div>
<div class="t" style="top:341.34px;font-size:12px;color:#a0a0a0;left:560.1px;transform:scaleX(0.9034);transform-origin:left top;">desde el vto del cbte</div>
<div class="a" style="left:675px;top:337px;width:57px;height:20px;background:#f0f0f0;box-shadow:inset 0 0 0 1px #b4b4b4;"></div>
<div class="a" style="left:716px;top:338.5px;width:13px;height:16.5px;background:#efefef;box-shadow:inset 0 0 0 1px #dadada;"></div>
<div class="a" style="left:716px;top:345.75px;width:13px;height:2.0px;background:#d6d6d6;"></div>
<svg class="a" style="left:0;top:0" width="1087" height="666" overflow="visible"><path d="M719.7 344.15 L725.3 344.15 L722.5 341.35 Z M719.7 349.05 L725.3 349.05 L722.5 351.85 Z" fill="#5e5e5e"/></svg>
<div class="t" style="top:340.44px;font-size:12px;color:#8a8a8a;right:373.4000000000001px;transform:scaleX(0.8800);transform-origin:right top;">0.00</div>
<div class="t" style="top:342.74px;font-size:10px;color:#a0a0a0;left:735px;">%</div>
<div class="a" style="left:755px;top:337px;width:71px;height:20px;background:#f0f0f0;box-shadow:inset 0 0 0 1px #b4b4b4;"></div>
<div class="a" style="left:810px;top:338.5px;width:13px;height:16.5px;background:#efefef;box-shadow:inset 0 0 0 1px #dadada;"></div>
<div class="a" style="left:810px;top:345.75px;width:13px;height:2.0px;background:#d6d6d6;"></div>
<svg class="a" style="left:0;top:0" width="1087" height="666" overflow="visible"><path d="M813.7 344.15 L819.3 344.15 L816.5 341.35 Z M813.7 349.05 L819.3 349.05 L816.5 351.85 Z" fill="#5e5e5e"/></svg>
<div class="t" style="top:340.44px;font-size:12px;color:#8a8a8a;right:279.70000000000005px;transform:scaleX(0.8800);transform-origin:right top;">0.00</div>
<div class="t" style="top:342.19px;font-size:11px;color:#a0a0a0;left:829px;">$</div>
<div class="t" style="top:341.34px;font-size:12px;color:#a0a0a0;left:842.8px;transform:scaleX(0.9716);transform-origin:left top;">rec/desc</div>
<div class="a" style="left:468px;top:362px;width:13px;height:13px;background:#fff;box-shadow:inset 0 0 0 1px #cccccc;"></div>
<div class="t" style="top:362.64px;font-size:12px;color:#6d6d6d;left:486.7px;transform:scaleX(0.8800);transform-origin:left top;">3º</div>
<div class="a" style="left:506px;top:360px;width:50px;height:20px;background:#f0f0f0;box-shadow:inset 0 0 0 1px #b4b4b4;"></div>
<div class="a" style="left:540px;top:361.5px;width:13px;height:16.5px;background:#efefef;box-shadow:inset 0 0 0 1px #dadada;"></div>
<div class="a" style="left:540px;top:368.75px;width:13px;height:2.0px;background:#d6d6d6;"></div>
<svg class="a" style="left:0;top:0" width="1087" height="666" overflow="visible"><path d="M543.7 367.15 L549.3 367.15 L546.5 364.35 Z M543.7 372.05 L549.3 372.05 L546.5 374.85 Z" fill="#5e5e5e"/></svg>
<div class="t" style="top:363.44px;font-size:12px;color:#8a8a8a;right:549.2px;transform:scaleX(0.8800);transform-origin:right top;">0</div>
<div class="t" style="top:364.34px;font-size:12px;color:#a0a0a0;left:560.1px;transform:scaleX(0.9034);transform-origin:left top;">desde el vto del cbte</div>
<div class="a" style="left:675px;top:360px;width:57px;height:20px;background:#f0f0f0;box-shadow:inset 0 0 0 1px #b4b4b4;"></div>
<div class="a" style="left:716px;top:361.5px;width:13px;height:16.5px;background:#efefef;box-shadow:inset 0 0 0 1px #dadada;"></div>
<div class="a" style="left:716px;top:368.75px;width:13px;height:2.0px;background:#d6d6d6;"></div>
<svg class="a" style="left:0;top:0" width="1087" height="666" overflow="visible"><path d="M719.7 367.15 L725.3 367.15 L722.5 364.35 Z M719.7 372.05 L725.3 372.05 L722.5 374.85 Z" fill="#5e5e5e"/></svg>
<div class="t" style="top:363.44px;font-size:12px;color:#8a8a8a;right:373.4000000000001px;transform:scaleX(0.8800);transform-origin:right top;">0.00</div>
<div class="t" style="top:365.74px;font-size:10px;color:#a0a0a0;left:735px;">%</div>
<div class="a" style="left:755px;top:360px;width:71px;height:20px;background:#f0f0f0;box-shadow:inset 0 0 0 1px #b4b4b4;"></div>
<div class="a" style="left:810px;top:361.5px;width:13px;height:16.5px;background:#efefef;box-shadow:inset 0 0 0 1px #dadada;"></div>
<div class="a" style="left:810px;top:368.75px;width:13px;height:2.0px;background:#d6d6d6;"></div>
<svg class="a" style="left:0;top:0" width="1087" height="666" overflow="visible"><path d="M813.7 367.15 L819.3 367.15 L816.5 364.35 Z M813.7 372.05 L819.3 372.05 L816.5 374.85 Z" fill="#5e5e5e"/></svg>
<div class="t" style="top:363.44px;font-size:12px;color:#8a8a8a;right:279.70000000000005px;transform:scaleX(0.8800);transform-origin:right top;">0.00</div>
<div class="t" style="top:365.19px;font-size:11px;color:#a0a0a0;left:829px;">$</div>
<div class="t" style="top:364.34px;font-size:12px;color:#a0a0a0;left:842.8px;transform:scaleX(0.9716);transform-origin:left top;">rec/desc</div>
<div class="a" style="left:463px;top:399px;width:6px;height:1px;background:#dcdcdc;"></div>
<div class="a" style="left:564px;top:399px;width:334px;height:1px;background:#dcdcdc;"></div>
<div class="a" style="left:463px;top:399px;width:1px;height:42px;background:#dcdcdc;"></div>
<div class="a" style="left:897px;top:399px;width:1px;height:42px;background:#dcdcdc;"></div>
<div class="a" style="left:463px;top:440px;width:435px;height:1px;background:#dcdcdc;"></div>
<div class="a" style="left:470px;top:393px;width:13px;height:13px;background:#fff;box-shadow:inset 0 0 0 1px #333333;"></div>
<svg class="a" style="left:470px;top:393px" width="13" height="13"><path d="M2.5 6.5 L5.2 9.3 L10.6 3.2" fill="none" stroke="#222" stroke-width="1.3"/></svg>
<div class="t" style="top:393.84px;font-size:12px;color:#000;left:488.5px;transform:scaleX(0.8974);transform-origin:left top;">Afecta valores</div>
<div class="t" style="top:417.34px;font-size:12px;color:#000;left:468.79999999999995px;text-decoration:underline;transform:scaleX(0.8977);transform-origin:left top;">Valor por defecto</div>
<div class="a" style="left:553px;top:414px;width:43px;height:20px;background:#fff;box-shadow:inset 0 0 0 1px #7a7a7a;"></div>
<div class="t" style="top:417.64px;font-size:12px;color:#000;left:555.9px;transform:scaleX(0.8800);transform-origin:left top;">2</div>
<div class="a" style="left:597px;top:414px;width:294px;height:19px;background:#f0f0f0;"></div>
<div class="a" style="left:597px;top:414px;width:294px;height:1px;background:#a0a0a0;"></div>
<div class="a" style="left:597px;top:414px;width:1px;height:19px;background:#a0a0a0;"></div>
<div class="t" style="top:418.34px;font-size:12px;color:#000;left:600.0px;transform:scaleX(0.8703);transform-origin:left top;">Cuenta Corriente</div>
<svg class="a" style="left:0;top:0" width="1087" height="666"><path d="M553.5 439.3 H690.5" stroke="#d9202e" stroke-width="4.2" stroke-linecap="round"/></svg>
<div class="a" style="left:463px;top:455px;width:4px;height:1px;background:#dcdcdc;"></div>
<div class="a" style="left:862px;top:455px;width:37px;height:1px;background:#dcdcdc;"></div>
<div class="a" style="left:463px;top:455px;width:1px;height:82px;background:#dcdcdc;"></div>
<div class="a" style="left:898px;top:455px;width:1px;height:82px;background:#dcdcdc;"></div>
<div class="a" style="left:463px;top:536px;width:436px;height:1px;background:#dcdcdc;"></div>
<div class="a" style="left:469px;top:448px;width:13px;height:13px;background:#fff;box-shadow:inset 0 0 0 1px #333333;"></div>
<div class="t" style="top:448.84px;font-size:12px;color:#000;left:487.5px;transform:scaleX(0.8865);transform-origin:left top;">Separa cuotas en distintos comprobantes (para financiación propia en ventas)</div>
<div class="t" style="top:470.14px;font-size:12px;color:#a0a0a0;left:468.29999999999995px;transform:scaleX(0.8712);transform-origin:left top;">Cuotas</div>
<div class="a" style="left:506px;top:467px;width:50px;height:20px;background:#f0f0f0;box-shadow:inset 0 0 0 1px #b4b4b4;"></div>
<div class="a" style="left:540px;top:468.5px;width:13px;height:16.5px;background:#efefef;box-shadow:inset 0 0 0 1px #dadada;"></div>
<div class="a" style="left:540px;top:475.75px;width:13px;height:2.0px;background:#d6d6d6;"></div>
<svg class="a" style="left:0;top:0" width="1087" height="666" overflow="visible"><path d="M543.7 474.15 L549.3 474.15 L546.5 471.35 Z M543.7 479.05 L549.3 479.05 L546.5 481.85 Z" fill="#5e5e5e"/></svg>
<div class="t" style="top:470.64px;font-size:12px;color:#8a8a8a;right:549.2px;transform:scaleX(0.8800);transform-origin:right top;">0</div>
<div class="t" style="top:470.54px;font-size:12px;color:#a0a0a0;left:597.0px;transform:scaleX(0.8824);transform-origin:left top;">Fecha</div>
<div class="a" style="left:633px;top:467px;width:128px;height:21px;background:#cccccc;box-shadow:inset 0 0 0 1px #cccccc;"></div>
<div class="t" style="top:471.64px;font-size:12px;color:#8d8d8d;left:636.4px;transform:scaleX(0.8800);transform-origin:left top;">Dias</div>
<svg class="a" style="left:0;top:0" width="1087" height="666"><path d="M747.0 476.0 L751.5 480.5 L756.0 476.0" fill="none" stroke="#a8a8a8" stroke-width="1.1"/></svg>
<div class="a" style="left:765px;top:467px;width:50px;height:20px;background:#f0f0f0;box-shadow:inset 0 0 0 1px #b4b4b4;"></div>
<div class="a" style="left:799px;top:468.5px;width:13px;height:16.5px;background:#efefef;box-shadow:inset 0 0 0 1px #dadada;"></div>
<div class="a" style="left:799px;top:475.75px;width:13px;height:2.0px;background:#d6d6d6;"></div>
<svg class="a" style="left:0;top:0" width="1087" height="666" overflow="visible"><path d="M802.7 474.15 L808.3 474.15 L805.5 471.35 Z M802.7 479.05 L808.3 479.05 L805.5 481.85 Z" fill="#5e5e5e"/></svg>
<div class="t" style="top:470.64px;font-size:12px;color:#8a8a8a;right:290.70000000000005px;transform:scaleX(0.8800);transform-origin:right top;">0</div>
<div class="t" style="top:493.04px;font-size:12px;color:#6d6d6d;left:468.29999999999995px;transform:scaleX(0.8712);transform-origin:left top;">Código</div>
<div class="a" style="left:506px;top:490px;width:50px;height:20px;background:#f0f0f0;box-shadow:inset 0 0 0 1px #b4b4b4;"></div>
<div class="a" style="left:540px;top:491.5px;width:13px;height:16.5px;background:#efefef;box-shadow:inset 0 0 0 1px #dadada;"></div>
<div class="a" style="left:540px;top:498.75px;width:13px;height:2.0px;background:#d6d6d6;"></div>
<svg class="a" style="left:0;top:0" width="1087" height="666" overflow="visible"><path d="M543.7 497.15 L549.3 497.15 L546.5 494.35 Z M543.7 502.05 L549.3 502.05 L546.5 504.85 Z" fill="#5e5e5e"/></svg>
<div class="t" style="top:493.64px;font-size:12px;color:#8a8a8a;right:549.2px;transform:scaleX(0.8800);transform-origin:right top;">0</div>
<div class="a" style="left:557px;top:490px;width:50px;height:1px;background:#8a8a8a;"></div>
<div class="a" style="left:557px;top:490px;width:1px;height:19px;background:#8a8a8a;"></div>
<div class="a" style="left:608px;top:490px;width:282px;height:1px;background:#8a8a8a;"></div>
<div class="a" style="left:608px;top:490px;width:1px;height:19px;background:#8a8a8a;"></div>
<div class="t" style="top:516.34px;font-size:12px;color:#333;left:468.9px;transform:scaleX(0.8859);transform-origin:left top;">Produc.</div>
<div class="a" style="left:506px;top:513px;width:50px;height:20px;background:#f0f0f0;box-shadow:inset 0 0 0 1px #b4b4b4;"></div>
<div class="a" style="left:540px;top:514.5px;width:13px;height:16.5px;background:#efefef;box-shadow:inset 0 0 0 1px #dadada;"></div>
<div class="a" style="left:540px;top:521.75px;width:13px;height:2.0px;background:#d6d6d6;"></div>
<svg class="a" style="left:0;top:0" width="1087" height="666" overflow="visible"><path d="M543.7 520.15 L549.3 520.15 L546.5 517.35 Z M543.7 525.05 L549.3 525.05 L546.5 527.85 Z" fill="#5e5e5e"/></svg>
<div class="t" style="top:516.64px;font-size:12px;color:#8a8a8a;right:549.2px;transform:scaleX(0.8800);transform-origin:right top;">0</div>
<div class="a" style="left:557px;top:513px;width:333px;height:1px;background:#8a8a8a;"></div>
<div class="a" style="left:557px;top:513px;width:1px;height:19px;background:#8a8a8a;"></div>
<div class="a" style="left:463px;top:550px;width:6px;height:1px;background:#dcdcdc;"></div>
<div class="a" style="left:601px;top:550px;width:73px;height:1px;background:#dcdcdc;"></div>
<div class="a" style="left:463px;top:550px;width:1px;height:41px;background:#dcdcdc;"></div>
<div class="a" style="left:673px;top:550px;width:1px;height:41px;background:#dcdcdc;"></div>
<div class="a" style="left:463px;top:590px;width:211px;height:1px;background:#dcdcdc;"></div>
<div class="t" style="top:544.84px;font-size:12px;color:#000;left:470.9px;transform:scaleX(0.8727);transform-origin:left top;">Comportamiento de precios</div>
<div class="a" style="left:469px;top:567px;width:13px;height:13px;background:#fff;box-shadow:inset 0 0 0 1px #333333;"></div>
<div class="t" style="top:567.34px;font-size:12px;color:#000;left:488.09999999999997px;transform:scaleX(0.8720);transform-origin:left top;">Ignora promoción</div>
<div class="a" style="left:581px;top:567px;width:13px;height:13px;background:#fff;box-shadow:inset 0 0 0 1px #333333;"></div>
<div class="t" style="top:567.34px;font-size:12px;color:#000;left:600.1px;transform:scaleX(0.8673);transform-origin:left top;">Ignora Oferta</div>
<div class="t" style="top:601.14px;font-size:12px;color:#000;left:463.2px;transform:scaleX(0.8793);transform-origin:left top;">Descripción</div>
<div class="a" style="left:524px;top:598px;width:375px;height:37px;background:#fff;box-shadow:inset 0 0 0 1px #7a7a7a;"></div>
</div>
</body></html>
